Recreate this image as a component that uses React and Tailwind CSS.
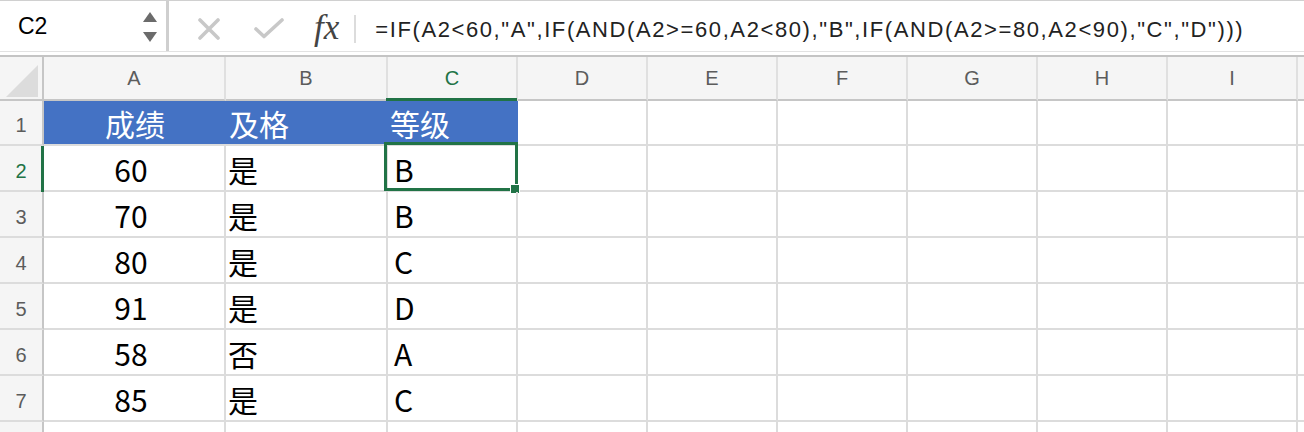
import React from "react";

const COLS = ["A", "B", "C", "D", "E", "F", "G", "H", "I", ""];
const ROWS = [
  ["60", "是", "B"],
  ["70", "是", "B"],
  ["80", "是", "C"],
  ["91", "是", "D"],
  ["58", "否", "A"],
  ["85", "是", "C"],
];
const FORMULA = '=IF(A2<60,"A",IF(AND(A2>=60,A2<80),"B",IF(AND(A2>=80,A2<90),"C","D")))';

const cellFont = { fontFamily: '"Noto Sans CJK SC", "Noto Sans", sans-serif' };
const uiFont = { fontFamily: '"Liberation Sans", sans-serif' };

function FormulaBar() {
  return (
    <div className="h-[57px] border-t border-[#d0d0d0] border-b-2 border-b-[#c4c4c4] bg-white">
      <div className="h-[51px] flex items-stretch border-b border-[#e2e2e2]">
        {/* Name box */}
        <div className="w-[166px] flex items-center justify-between pl-[18px] pr-[9px]">
          <span className="text-[23px] text-black" style={uiFont}>C2</span>
          <div className="flex flex-col gap-[10px] pt-[1px]">
            <svg width="14" height="10" viewBox="0 0 14 10"><path d="M7 0 L14 10 L0 10 Z" fill="#6b6b6b" /></svg>
            <svg width="14" height="10" viewBox="0 0 14 10"><path d="M0 0 L14 0 L7 10 Z" fill="#6b6b6b" /></svg>
          </div>
        </div>
        <div className="w-[3px] bg-[#cfcfcf]" />
        <div className="flex items-center pl-[29px]">
          <svg width="22" height="22" viewBox="0 0 22 22" className="mt-[6px]">
            <path d="M2 2 L20 20 M20 2 L2 20" stroke="#c8c8c8" strokeWidth="3.6" strokeLinecap="round" fill="none" />
          </svg>
          <svg width="30" height="22" viewBox="0 0 30 22" className="ml-[34px] mt-[6px]">
            <path d="M2 11 L10 18.5 L28 2" stroke="#c8c8c8" strokeWidth="3.6" strokeLinecap="round" strokeLinejoin="round" fill="none" />
          </svg>
          <span
            className="ml-[30px] mt-[2px] text-[35px] italic text-[#444] leading-none"
            style={{ fontFamily: '"Liberation Serif", "DejaVu Serif", serif' }}
          >
            fx
          </span>
          <div className="ml-[15px] mt-[6px] w-[2px] h-[28px] bg-[#dcdcdc]" />
          <span className="ml-[19px] mt-[6px] text-[22px] tracking-[1.6px] text-[#222] whitespace-nowrap" style={uiFont}>
            {FORMULA}
          </span>
        </div>
      </div>
    </div>
  );
}

export default function App() {
  const colTemplate = "grid-cols-[44px_182px_162px_130px_130px_130px_130px_130px_130px_130px_130px]";
  return (
    <div className="w-[1304px] h-[432px] overflow-hidden bg-white">
      <FormulaBar />

      <div className={`grid ${colTemplate} grid-rows-[44px_45px_46px_46px_46px_46px_46px_46px_46px]`}>
        {/* Column header row */}
        <div className="bg-[#f5f5f5] border-r-2 border-b-2 border-[#c6c6c6] flex items-end justify-end pr-[4px] pb-[2px]">
          <svg width="32" height="32" viewBox="0 0 32 32"><path d="M32 0 L32 32 L0 32 Z" fill="#dcdcdc" /></svg>
        </div>
        {COLS.map((c, i) => (
          <div
            key={i}
            className={`relative bg-[#f5f5f5] border-b-2 border-b-[#c6c6c6] border-r-2 border-r-[#e0e0e0] flex items-center justify-center text-[20px] ${c === "C" ? "text-[#217346]" : "text-[#5c5c5c]"}`}
            style={uiFont}
          >
            {c}
            {c === "C" && <div className="absolute left-[-2px] right-[-1px] bottom-[-2px] h-[3px] bg-[#217346]" />}
          </div>
        ))}

        {/* Row 1: header cells */}
        <div className="bg-[#f5f5f5] border-r-2 border-r-[#c6c6c6] border-b-2 border-b-[#dcdcdc] flex items-end justify-center pb-[4px] text-[20px] text-[#5c5c5c]" style={uiFont}>
          1
        </div>
        <div className="bg-[#4472c4] border-b-2 border-b-[#dcdcdc] flex items-end justify-center pb-[1px] text-[30px] leading-[40px] text-white" style={cellFont}>成绩</div>
        <div className="bg-[#4472c4] border-b-2 border-b-[#dcdcdc] flex items-end pl-[3px] pb-[1px] text-[30px] leading-[40px] text-white" style={cellFont}>及格</div>
        <div className="bg-[#4472c4] border-b-2 border-b-[#dcdcdc] border-r-2 border-r-[#4472c4] flex items-end pl-[2px] pb-[1px] text-[30px] leading-[40px] text-white" style={cellFont}>等级</div>
        {COLS.slice(3).map((c, i) => (
          <div key={i} className="border-r-2 border-b-2 border-[#dcdcdc]" />
        ))}

        {/* Data rows */}
        {ROWS.map((r, i) => {
          const rowNo = i + 2;
          const sel = rowNo === 2;
          return (
            <React.Fragment key={rowNo}>
              <div
                className={`relative bg-[#f5f5f5] border-r-2 border-r-[#c6c6c6] border-b-2 border-b-[#dcdcdc] flex items-end justify-center pb-[4px] text-[20px] ${sel ? "text-[#217346]" : "text-[#5c5c5c]"}`}
                style={uiFont}
              >
                {rowNo}
                {sel && <div className="absolute top-0 bottom-[-2px] right-[-2px] w-[3px] bg-[#217346]" />}
              </div>
              <div className="border-r-2 border-b-2 border-[#dcdcdc] flex items-end justify-center pr-[6px] pb-[1px] text-[30px] leading-[40px] text-black" style={cellFont}>{r[0]}</div>
              <div className="border-r-2 border-b-2 border-[#dcdcdc] flex items-end pl-[2px] pb-[1px] text-[30px] leading-[40px] text-black" style={cellFont}>{r[1]}</div>
              <div className="relative border-r-2 border-b-2 border-[#dcdcdc] flex items-end pl-[6px] pb-[1px] text-[30px] leading-[40px] text-black" style={cellFont}>
                {r[2]}
                {sel && (
                  <>
                    <div className="absolute left-[-4px] top-[-4px] right-[-2px] bottom-[-1px] border-[3px] border-[#217346]" />
                    <div className="absolute right-[-4px] bottom-[-4px] w-[10px] h-[10px] bg-[#217346] border border-white" />
                  </>
                )}
              </div>
              {COLS.slice(3).map((c, j) => (
                <div key={j} className="border-r-2 border-b-2 border-[#dcdcdc]" />
              ))}
            </React.Fragment>
          );
        })}

        {/* Row 8 (cut off at the bottom edge) */}
        <div className="bg-[#f5f5f5] border-r-2 border-r-[#c6c6c6]" />
        {COLS.map((c, i) => (
          <div key={i} className="border-r-2 border-[#dcdcdc]" />
        ))}
      </div>
    </div>
  );
}
